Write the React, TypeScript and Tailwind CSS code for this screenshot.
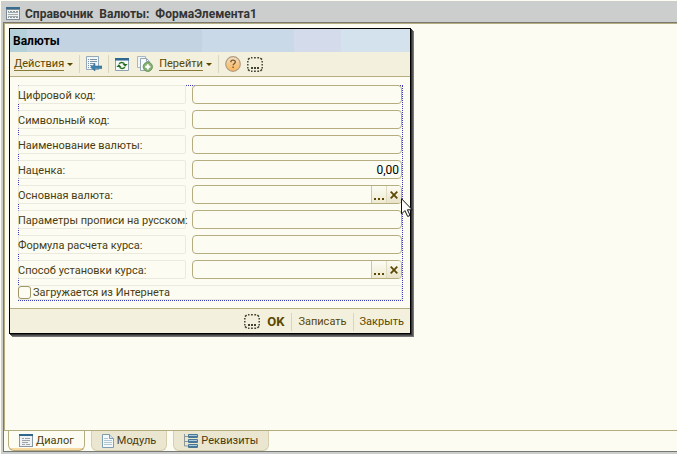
import type { ReactNode } from "react";

const fields = [
  { id: "digital", label: "Цифровой код:" },
  { id: "symbol", label: "Символьный код:" },
  { id: "name", label: "Наименование валюты:" },
  { id: "markup", label: "Наценка:", value: "0,00" },
  { id: "base", label: "Основная валюта:", picker: true },
  { id: "params", label: "Параметры прописи на русском:" },
  { id: "formula", label: "Формула расчета курса:" },
  { id: "method", label: "Способ установки курса:", picker: true },
];

function FormIcon() {
  return (
    <svg width="14" height="13" viewBox="0 0 14 13" shapeRendering="crispEdges">
      <path d="M0 0h14v13H0z" fill="#7b8a94" />
      <path d="M1 3h12v9H1z" fill="#f1f4f4" />
      <path d="M0 0h14v2H0z" fill="#376b8f" />
      <path d="M2 4.5h1M4 4.5h2M7 4.5h2M10 4.5h2M2 10.5h1M4 10.5h2M7 10.5h2M10 10.5h2" stroke="#8b979e" />
      <path d="M2 5.5h10M2 7.5h10M2 9.5h10" stroke="#a3abae" />
    </svg>
  );
}

function DialogIcon() {
  return (
    <svg width="14" height="13" viewBox="0 0 14 13" shapeRendering="crispEdges">
      <path d="M0 0h14v13H0z" fill="#8796a3" />
      <path d="M1 2h12v10H1z" fill="#eef2f4" />
      <path d="M0 0h14v2H0z" fill="#2f668e" />
      <path d="M3 4.5h2M6 4.5h5M3 6.5h8M3 8.5h6M3 10.5h3M7 10.5h4" stroke="#a0a4a6" />
    </svg>
  );
}

function WriteIcon() {
  return (
    <svg width="16" height="16" viewBox="0 0 16 16">
      <path d="M.5.5h12v13H.5z" fill="#f4f7f9" stroke="#93a9ba" />
      <path d="M2 3.5h1M4 3.5h7M2 5.5h1M4 5.5h7M2 7.5h1M4 7.5h5M2 9.5h1M4 9.5h2M2 11.5h1" stroke="#7d92a3" />
      <path d="M4.5 11.3 9 7.6v2.4h7v2.6H9V15z" fill="#3f80ad" stroke="#24638f" strokeWidth=".5" />
    </svg>
  );
}

function RefreshIcon() {
  return (
    <svg width="14" height="13" viewBox="0 0 14 13">
      <path d="M.5.5h13v12H.5z" fill="#f6f9fa" stroke="#8da1b0" />
      <path d="M0 0h14v2.5H0z" fill="#2e6790" />
      <path d="M4.2 5.8c1-1.8 4-1.8 5.2 0M9.8 9.2c-1 1.8-4 1.8-5.2 0" fill="none" stroke="#2f7424" strokeWidth="1.5" />
      <path d="M7.6 6h5L10.1 8.8zM6.4 9h-5L3.9 6.2z" fill="#276b1e" />
    </svg>
  );
}

function CopyIcon() {
  return (
    <svg width="16" height="16" viewBox="0 0 16 16">
      <path d="M.5.5h8v11h-8z" fill="#f3f6f7" stroke="#a9b7c1" />
      <path d="M3.5 2.5h6l3 3v9h-9z" fill="#f8fafb" stroke="#93a6b4" />
      <path d="M9.5 2.5v3h3" fill="none" stroke="#93a6b4" />
      <circle cx="10.8" cy="10.8" r="4.6" fill="#87b172" stroke="#6a9559" />
      <path d="M10.8 8.2v5.2M8.2 10.8h5.2" stroke="#fff" strokeWidth="2" />
    </svg>
  );
}

function HelpIcon() {
  return (
    <svg width="16" height="16" viewBox="0 0 16 16">
      <defs>
        <linearGradient id="help" x1="0" y1="0" x2="0" y2="1">
          <stop offset="0" stopColor="#f2e3c9" />
          <stop offset=".5" stopColor="#f5c88a" />
          <stop offset="1" stopColor="#fbb65a" />
        </linearGradient>
      </defs>
      <circle cx="8" cy="8" r="7.3" fill="url(#help)" stroke="#b39c80" strokeWidth="1.2" />
      <path d="M5.8 6.2c0-2.7 4.5-2.7 4.5-.2 0 1.7-2.2 1.7-2.2 3.3" fill="none" stroke="#7a5630" strokeWidth="1.3" />
      <path d="M7.4 10.5h1.4v1.5H7.4z" fill="#7a5630" />
    </svg>
  );
}

function PlaceholderIcon() {
  return (
    <svg width="16" height="15" viewBox="0 0 16 15">
      <path
        d="M4 .8h1.5M7 .8h1.8M10.3 .8h1.8M4 14.2h1.5M7 14.2h1.8M10.3 14.2h1.8M.8 4v1.5M.8 7v1.5M.8 10v1.5M15.2 4v1.5M15.2 7v1.5M15.2 10v1.5M1 2.6 2.6 1M13.4 1 15 2.6M1 12.4 2.6 14M13.4 14l1.6-1.6"
        fill="none"
        stroke="#444434"
        strokeWidth="1.5"
      />
      <path d="M4 10h2v2H4zM7 10h2v2H7zM10 10h2v2h-2z" fill="#444434" />
    </svg>
  );
}

function PageIcon() {
  return (
    <svg width="12" height="14" viewBox="0 0 12 14">
      <path d="M.5.5h7l4 4v9H.5z" fill="#f5f9fc" stroke="#7d9db5" />
      <path d="M7.5.5v4h4" fill="#d5e3ed" stroke="#7d9db5" />
      <path d="M2 4.5h4M2 6.5h8M2 8.5h8M2 10.5h8" stroke="#b1c6d5" />
    </svg>
  );
}

function TreeIcon() {
  return (
    <svg width="14" height="14" viewBox="0 0 14 14">
      <path d="M.5 0v12M.5 2.5h4M.5 7.5h4M.5 12h4" fill="none" stroke="#8f979c" />
      {[0, 5, 10].map((y) => (
        <g key={y}>
          <rect x="4" y={y} width="10" height="4" rx="1" fill="#4b7796" />
          <rect x="5" y={y + 1} width="8" height="1" fill="#a9c9dc" />
        </g>
      ))}
    </svg>
  );
}

function CloseIcon() {
  return (
    <svg width="8" height="8" viewBox="0 0 8 8">
      <path d="m.7.7 6.6 6.6M7.3.7.7 7.3" stroke="#5d4907" strokeWidth="1.8" />
    </svg>
  );
}

function CursorIcon() {
  return (
    <svg width="13" height="20" viewBox="0 0 13 20" className="pointer-events-none absolute top-[169px] left-[391px]">
      <path d="M.5.7v15.3l3.4-3.4 2.8 5.9 2.4-1.1-2.7-5.6h4.8z" fill="#fff" stroke="#111" />
    </svg>
  );
}

function Separator() {
  return <span className="h-[18px] w-px bg-[#d9d5c0]" />;
}

function MenuButton({ children }: { children: ReactNode }) {
  return (
    <button className="flex items-center gap-[3px] whitespace-nowrap text-[#5c4700]">
      <span className="border-b border-[#8a7836] leading-[13px]">{children}</span>
      <svg width="6" height="3" viewBox="0 0 6 3">
        <path d="M0 0h6L3 3z" fill="#5c4700" />
      </svg>
    </button>
  );
}

function Field({ id, label, value, picker }: { id: string; label: string; value?: string; picker?: boolean }) {
  return (
    <>
      <label htmlFor={id} className="h-[19px] rounded-xs bg-[#fcfcf3] leading-[21px] whitespace-nowrap inset-ring inset-ring-[#ebeadf]">
        {label}
      </label>
      <div className="flex h-[19px] overflow-hidden rounded-[4px] border border-[#b5ad80] bg-[#fcfcf3]">
        <input id={id} defaultValue={value} className="min-w-0 flex-1 bg-transparent px-0.5 text-right text-[12px] text-black outline-none" />
        {picker && (
          <>
            <button aria-label="Выбрать" className="flex w-[15px] items-end justify-center border-l border-[#cbc6a6] bg-linear-to-b from-[#fcfcf3] to-[#eeead0] pb-[3px]">
              <svg width="10" height="2" viewBox="0 0 10 2">
                <path d="M0 0h2v2H0zM4 0h2v2H4zM8 0h2v2H8z" fill="#5d4907" />
              </svg>
            </button>
            <button aria-label="Очистить" className="flex w-[15px] items-center justify-center border-l border-[#dfdac0] bg-linear-to-b from-[#fcfcf3] to-[#e8e2c8]">
              <CloseIcon />
            </button>
          </>
        )}
      </div>
    </>
  );
}

function CurrencyDialog() {
  return (
    <section className="relative w-[402px] border border-black bg-[#fcfcf3] shadow-[1px_1px_0_#333,2px_2px_0_#555,3px_3px_0_#777]">
      <h2 className="h-[23px] bg-[linear-gradient(90deg,#b4d0d8_17px,#c4d3e1_17px,#c4d3e1_192px,#cad9e8_192px,#cad9e8_284px,#d4dceb_284px,#d4dceb_331px,#d4e2ee_331px)] px-[3px] text-[12px] leading-6 font-bold text-black">
        Валюты
      </h2>
      <div className="flex h-[25px] items-center border-b border-[#b5ad80] bg-[#f3f0dd] px-1">
        <MenuButton>Действия</MenuButton>
        <div className="ml-1.5 flex items-center gap-1.5">
          <Separator />
          <button aria-label="Записать элемент"><WriteIcon /></button>
          <Separator />
          <button aria-label="Обновить"><RefreshIcon /></button>
        </div>
        <div className="ml-2 flex items-center gap-1.5">
          <button aria-label="Скопировать"><CopyIcon /></button>
          <MenuButton>Перейти</MenuButton>
          <Separator />
          <button aria-label="Справка"><HelpIcon /></button>
        </div>
        <button aria-label="Действие" className="ml-1.5"><PlaceholderIcon /></button>
      </div>
      <form className="pt-2 pr-[7px] pb-[7px] pl-2">
        <div className="relative pr-px pb-px">
          <div className="pointer-events-none absolute inset-0 border border-dotted border-[#3a3ab8]" />
          <div className="relative grid grid-cols-[168px_1fr] gap-1.5">
            {fields.map((field) => (
              <Field key={field.id} {...field} />
            ))}
            <label className="col-span-2 flex h-[15px] items-center gap-0.5 bg-[#fcfcf3] leading-4 inset-ring inset-ring-[#ebeadf]">
              <input type="checkbox" className="size-[13px] appearance-none rounded-[3px] border border-[#a09668] bg-[#fcfcf3] checked:bg-[#5d4907]" />
              Загружается из Интернета
            </label>
          </div>
        </div>
      </form>
      <div className="flex h-[25px] items-center justify-end gap-1.5 border-t border-[#b5ad80] bg-[#f3f0dd] pt-px pr-1.5 text-[#5c4700]">
        <button aria-label="Действие"><PlaceholderIcon /></button>
        <button className="px-px text-[13px] font-bold">OK</button>
        <Separator />
        <button>Записать</button>
        <Separator />
        <button>Закрыть</button>
      </div>
      <CursorIcon />
    </section>
  );
}

function Tab({ icon, active, children }: { icon: ReactNode; active?: boolean; children: ReactNode }) {
  return (
    <button
      className={
        active
          ? "flex h-5 items-center gap-[3px] rounded-b-md border border-t-0 border-[#b5ad80] bg-[#fcfcf3] bg-[linear-gradient(0deg,#f8d9a2_2px,transparent_2px)] px-2.5"
          : "flex h-5 items-center gap-[3px] rounded-b-md border border-t-0 border-[#d5cfb0] bg-[#ebe6d0] px-2.5"
      }
    >
      {icon}
      {children}
    </button>
  );
}

export default function App() {
  return (
    <div className="flex h-screen flex-col border-l border-[#fcfcf3] bg-[#cccecd] pb-0.5 font-['Roboto','Liberation_Sans',sans-serif] text-[11px] leading-[14px] text-[#4a3c10]">
      <header className="flex h-[22px] shrink-0 items-center gap-[5px] border-t border-[#fcfcf3] pt-1 pl-[5px]">
        <FormIcon />
        <h1 className="text-[12px] font-bold text-[#333]">Справочник&nbsp; Валюты:&nbsp; ФормаЭлемента1</h1>
      </header>
      <div className="ml-0.5 flex min-h-0 flex-1 flex-col border-y border-l border-[#777872] bg-[#fcfcf3]">
        <main className="flex-1 border border-r-0 border-[#b5ad80] p-1">
          <CurrencyDialog />
        </main>
        <nav className="flex h-5 gap-1.5 pl-1">
          <Tab active icon={<DialogIcon />}>Диалог</Tab>
          <Tab icon={<PageIcon />}>Модуль</Tab>
          <Tab icon={<TreeIcon />}>Реквизиты</Tab>
        </nav>
      </div>
    </div>
  );
}
